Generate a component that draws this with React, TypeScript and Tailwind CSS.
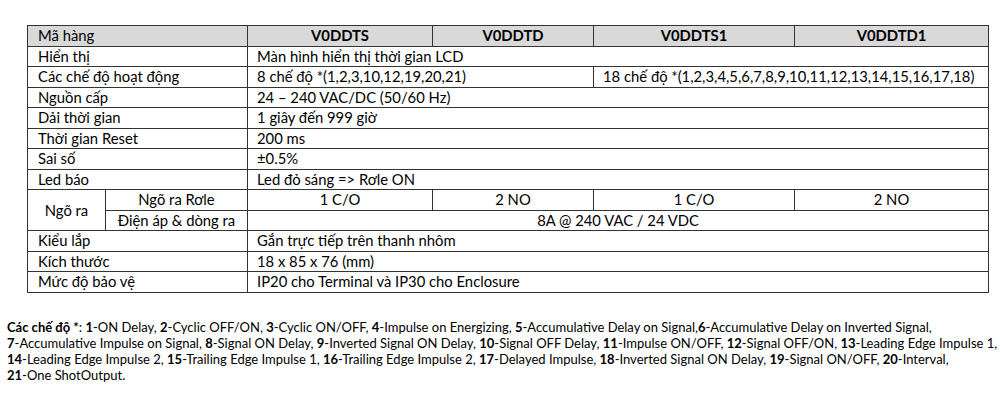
const rows: [string, string][] = [
  ['Hiển thị', 'Màn hình hiển thị thời gian LCD'],
]

const simple: [string, string][] = [
  ['Nguồn cấp', '24 – 240 VAC/DC (50/60 Hz)'],
  ['Dải thời gian', '1 giây đến 999 giờ'],
  ['Thời gian Reset', '200 ms'],
  ['Sai số', '±0.5%'],
  ['Led báo', 'Led đỏ sáng => Rơle ON'],
]

const tail: [string, string][] = [
  ['Kiểu lắp', 'Gắn trực tiếp trên thanh nhôm'],
  ['Kích thước', '18 x 85 x 76 (mm)'],
  ['Mức độ bảo vệ', 'IP20 cho Terminal và IP30 cho Enclosure'],
]

const cell = 'border-[1.5px] border-[#333] h-[20.5px] p-0 leading-none'

const Row = ({ label, value }: { label: string; value: string }) => (
  <tr>
    <td colSpan={2} className={`${cell} pl-[10px]`}>{label}</td>
    <td colSpan={4} className={`${cell} pl-[9px]`}>{value}</td>
  </tr>
)

const B = ({ children }: { children: React.ReactNode }) => <b className="font-bold">{children}</b>

export default function App() {
  return (
    <div className="w-[1000px] h-[400px] bg-white text-black font-['Lato',sans-serif] overflow-hidden">
      <div className="pt-[25px] pl-[27px]">
        <table className="border-collapse table-fixed w-[961px] text-[14.8px]">
          <colgroup>
            <col className="w-[78px]" />
            <col className="w-[142px]" />
            <col className="w-[185px]" />
            <col className="w-[161px]" />
            <col className="w-[201px]" />
            <col className="w-[194px]" />
          </colgroup>
          <tbody>
            <tr className="bg-[#d9d9d9]">
              <td colSpan={2} className={`${cell} pl-[10px]`}>Mã hàng</td>
              <td className={`${cell} text-center font-bold`}>V0DDTS</td>
              <td className={`${cell} text-center font-bold`}>V0DDTD</td>
              <td className={`${cell} text-center font-bold`}>V0DDTS1</td>
              <td className={`${cell} text-center font-bold`}>V0DDTD1</td>
            </tr>
            {rows.map(([l, v]) => (
              <Row key={l} label={l} value={v} />
            ))}
            <tr>
              <td colSpan={2} className={`${cell} pl-[10px]`}>Các chế độ hoạt động</td>
              <td colSpan={2} className={`${cell} pl-[9px]`}>8 chế độ *(1,2,3,10,12,19,20,21)</td>
              <td colSpan={2} className={`${cell} pl-[9px] whitespace-nowrap`}>
                18 chế độ *(1,2,3,4,5,6,7,8,9,10,11,12,13,14,15,16,17,18)
              </td>
            </tr>
            {simple.map(([l, v]) => (
              <Row key={l} label={l} value={v} />
            ))}
            <tr>
              <td rowSpan={2} className={`${cell} text-center`}>Ngõ ra</td>
              <td className={`${cell} text-center`}>Ngõ ra Rơle</td>
              <td className={`${cell} text-center`}>1 C/O</td>
              <td className={`${cell} text-center`}>2 NO</td>
              <td className={`${cell} text-center`}>1 C/O</td>
              <td className={`${cell} text-center`}>2 NO</td>
            </tr>
            <tr>
              <td className={`${cell} text-center whitespace-nowrap`}>Điện áp &amp; dòng ra</td>
              <td colSpan={4} className={`${cell} text-center`}>8A @ 240 VAC / 24 VDC</td>
            </tr>
            {tail.map(([l, v]) => (
              <Row key={l} label={l} value={v} />
            ))}
          </tbody>
        </table>
      </div>

      <div className="mt-[26px] pl-[7px] text-[13px] leading-[16px] whitespace-nowrap">
        <div>
          <B>Các chế độ *</B>: <B>1</B>-ON Delay, <B>2</B>-Cyclic OFF/ON, <B>3</B>-Cyclic ON/OFF, <B>4</B>-Impulse on Energizing,{' '}
          <B>5</B>-Accumulative Delay on Signal,<B>6</B>-Accumulative Delay on Inverted Signal,
        </div>
        <div>
          <B>7</B>-Accumulative Impulse on Signal, <B>8</B>-Signal ON Delay, <B>9</B>-Inverted Signal ON Delay, <B>10</B>-Signal OFF Delay,{' '}
          <B>11</B>-Impulse ON/OFF, <B>12</B>-Signal OFF/ON, <B>13</B>-Leading Edge Impulse 1,
        </div>
        <div>
          <B>14</B>-Leading Edge Impulse 2, <B>15</B>-Trailing Edge Impulse 1, <B>16</B>-Trailing Edge Impulse 2, <B>17</B>-Delayed Impulse,{' '}
          <B>18</B>-Inverted Signal ON Delay, <B>19</B>-Signal ON/OFF, <B>20</B>-Interval,
        </div>
        <div>
          <B>21</B>-One ShotOutput.
        </div>
      </div>
    </div>
  )
}
